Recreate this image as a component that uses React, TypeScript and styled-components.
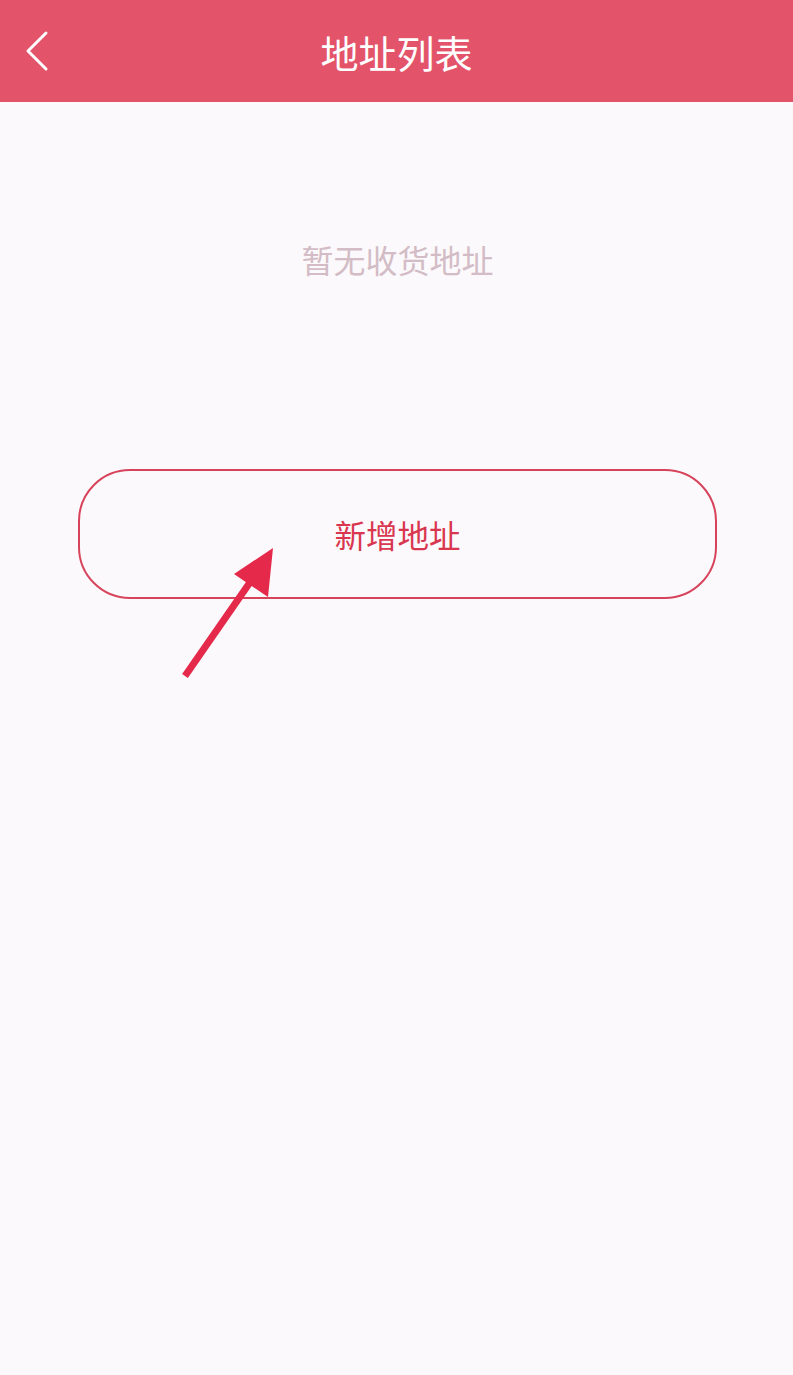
import React from 'react';
import styled, { createGlobalStyle } from 'styled-components';

const GlobalStyle = createGlobalStyle`
  html, body {
    margin: 0;
    padding: 0;
    background: #fbf9fb;
    font-family: "Noto Sans CJK SC", "Noto Sans", sans-serif;
  }
`;

const Page = styled.div`
  min-height: 1375px;
  background: #fbf9fb;
`;

const Header = styled.header`
  height: 102px;
  background: #e3546b;
  display: grid;
  grid-template-columns: 90px 1fr 90px;
  align-items: center;
`;

const BackButton = styled.button`
  border: none;
  background: none;
  padding: 0 0 0 24px;
  height: 100%;
  display: flex;
  align-items: center;
  cursor: pointer;
`;

const Title = styled.h1`
  margin: 0;
  text-align: center;
  color: #ffffff;
  font-size: 38px;
  font-weight: 400;
`;

const Content = styled.main`
  display: flex;
  flex-direction: column;
  align-items: center;
  padding: 0 76px 0 78px;
`;

const EmptyText = styled.p`
  margin: 139px 0 0;
  font-size: 32px;
  line-height: 36px;
  color: #d3bcc6;
`;

const AddWrap = styled.div`
  position: relative;
  align-self: stretch;
  margin-top: 192px;
`;

const AddButton = styled.button`
  width: 100%;
  height: 130px;
  border: 2px solid #d8435c;
  border-radius: 52px;
  background: transparent;
  color: #d9364f;
  font-family: inherit;
  font-size: 31.5px;
  cursor: pointer;
`;

const Pointer = styled.svg`
  position: absolute;
  left: 100px;
  top: 74px;
  pointer-events: none;
`;

const App: React.FC = () => {
  return (
    <Page>
      <GlobalStyle />
      <Header>
        <BackButton aria-label="返回">
          <svg width="26" height="42" viewBox="0 0 26 42">
            <polyline
              points="22,3 4,21 22,39"
              fill="none"
              stroke="#ffffff"
              strokeWidth="3"
              strokeLinecap="round"
              strokeLinejoin="round"
            />
          </svg>
        </BackButton>
        <Title>地址列表</Title>
        <div />
      </Header>
      <Content>
        <EmptyText>暂无收货地址</EmptyText>
        <AddWrap>
          <AddButton>新增地址</AddButton>
          <Pointer width="110" height="150" viewBox="0 0 110 150">
            <line x1="7" y1="133" x2="75" y2="35" stroke="#e5294b" strokeWidth="7" strokeLinecap="butt" />
            <polygon points="95,5 56,31 90,54" fill="#e5294b" />
          </Pointer>
        </AddWrap>
      </Content>
    </Page>
  );
};

export default App;
